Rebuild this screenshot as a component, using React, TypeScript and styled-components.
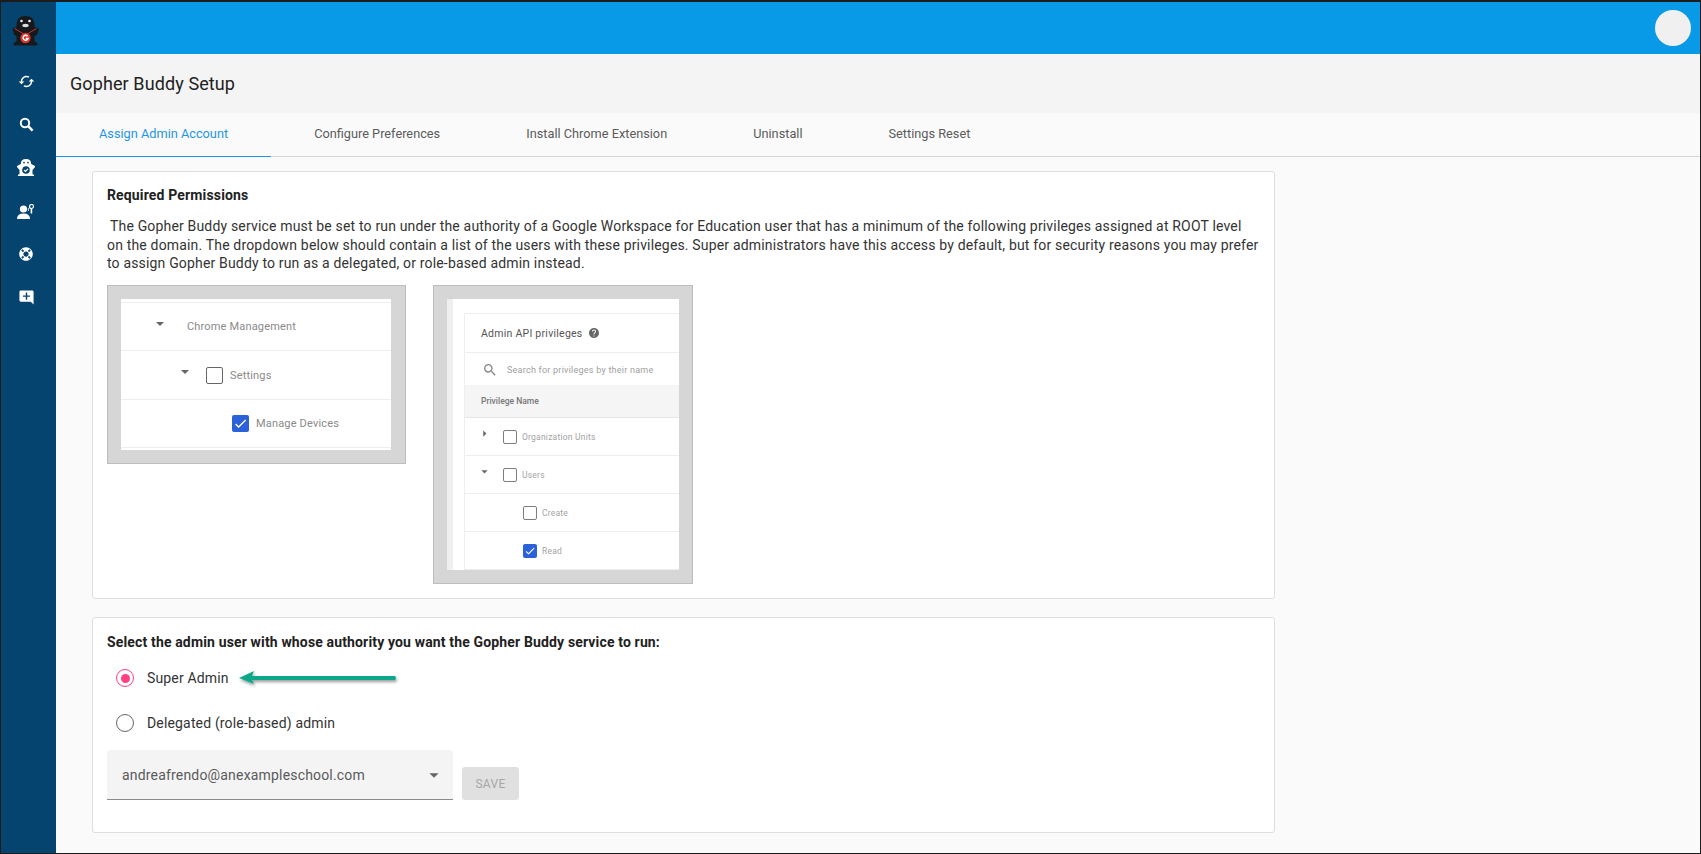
import React from "react";
import styled, { createGlobalStyle } from "styled-components";
import { MdSync, MdSearch, MdAddComment, MdArrowDropDown, MdArrowRight, MdHelp, MdCheck } from "react-icons/md";
import { FaLifeRing } from "react-icons/fa";

const Global = createGlobalStyle`
  html, body { margin: 0; padding: 0; background: #fff; }
  body { font-family: Roboto, "Liberation Sans", sans-serif; color: #212121; }
  * { box-sizing: border-box; }
`;

const Shell = styled.div`
  width: 1701px; height: 854px; display: flex; overflow: hidden;
  border-style: solid; border-color: #1c1c1c; border-width: 2px 1px 1px 1px;
  background: #fafafa;
`;
const Sidebar = styled.nav`
  width: 55px; flex: none; background: #05446f; display: flex; flex-direction: column; align-items: center; padding-right: 5px;
`;
const LogoSlot = styled.div`
  height: 58px; display: flex; align-items: flex-start; justify-content: center; padding-top: 13px;
`;
const NavIcon = styled.div`
  height: 43.2px; width: 100%; display: flex; align-items: center; justify-content: center; color: #fff;
`;
const SyncIcon = styled(MdSync)`
  transform: rotate(90deg);
`;
const Main = styled.div`
  flex: 1; min-width: 0; display: flex; flex-direction: column;
`;
const TopBar = styled.header`
  height: 52px; flex: none; background: #089ae6; display: flex; align-items: center; justify-content: flex-end; padding-right: 9px;
`;
const Avatar = styled.div`
  width: 36px; height: 36px; border-radius: 50%; background: #f0f0f0;
`;
const TitleBand = styled.div`
  height: 59px; flex: none; background: #f4f4f4; display: flex; align-items: center; padding-left: 14px;
`;
const Title = styled.h1`
  margin: 0; font-size: 18px; font-weight: 400; color: #212121; letter-spacing: 0.1px;
`;
const Tabs = styled.div`
  height: 44px; flex: none; display: flex; border-bottom: 1px solid #d4d4d4; background: #fafafa;
`;
const Tab = styled.div<{ $active?: boolean }>`
  padding: 0 43px 2px; display: flex; align-items: center; height: 44px; font-size: 12.75px;
  color: ${(p) => (p.$active ? "#1e96e4" : "#5b5b5b")};
  border-bottom: 1px solid ${(p) => (p.$active ? "#1e96e4" : "transparent")};
  font-weight: 400;
`;
const Content = styled.div`
  padding: 14px 0 0 36px; display: flex; flex-direction: column; gap: 18px;
`;
const Card = styled.section<{ $h: number; $pt: number }>`
  width: 1183px; height: ${(p) => p.$h}px; background: #fff; border: 1px solid #dedede; border-radius: 3px; padding: ${(p) => p.$pt}px 13px 0 14px;
`;
const CardTitle = styled.h2`
  margin: 0; font-size: 14px; line-height: 19px; font-weight: 700; color: #212121; letter-spacing: 0.15px;
`;
const Para = styled.p`
  margin: 12px 0 0 0; font-size: 14px; line-height: 18.7px; color: #333; letter-spacing: 0.17px; text-indent: 3px;
`;
const Shots = styled.div`
  display: flex; gap: 27px; margin-top: 12px; align-items: flex-start;
`;
const Frame = styled.div<{ $w: number; $h: number; $pr: number }>`
  width: ${(p) => p.$w}px; height: ${(p) => p.$h}px; background: #d6d6d6; border: 1px solid #bdbdbd; padding: 13px ${(p) => p.$pr}px 13px 13px; flex: none;
`;
const Shot = styled.div`
  width: 100%; height: 100%; background: #fff; overflow: hidden; font-family: Roboto, sans-serif; color: #8a8a8a;
`;
const ChromeShot = styled(Shot)`
  padding-top: 3px;
`;
const ChromeRow = styled.div<{ $pl: number; $first?: boolean }>`
  height: ${(p) => (p.$first ? 49.3 : 48.3)}px; border-bottom: 1px solid #eeeeee; border-top: ${(p) => (p.$first ? "1px solid #eeeeee" : "none")}; display: flex; align-items: center; padding-left: ${(p) => p.$pl}px; font-size: 11px; letter-spacing: 0.17px;
`;
const RowLabel = styled.span<{ $ml: number }>`
  margin-left: ${(p) => p.$ml}px;
`;
const Caret = styled.span<{ $mr: number }>`
  display: inline-block; width: 0; height: 0; border-left: 4px solid transparent; border-right: 4px solid transparent; border-top: 4px solid #666;
  margin-right: ${(p) => p.$mr}px; position: relative; top: -3px; flex: none;
`;
const Check = styled.span<{ $size: number; $on?: boolean; $light?: boolean }>`
  width: ${(p) => p.$size}px; height: ${(p) => p.$size}px; flex: none; border-radius: 2px; display: inline-flex; align-items: center; justify-content: center;
  border: ${(p) => (p.$on ? "none" : `1.5px solid ${p.$light ? "#7e7e7e" : "#666"}`)}; background: ${(p) => (p.$on ? "#2b62d9" : "#fff")}; color: #fff;
`;
const ApiShot = styled(Shot)`
  display: flex; padding-left: 6px; background: #efefef;
`;
const ApiBody = styled.div`
  flex: 1; background: #fff; padding: 14px 0 0 11px;
`;
const ApiPanel = styled.div`
  border-left: 1px solid #eee; border-top: 1px solid #eee;
`;
const ApiHead = styled.div`
  height: 39px; border-bottom: 1px solid #eee; display: flex; align-items: center; padding-left: 16px; gap: 5px; font-size: 10.5px; color: #555; letter-spacing: 0.25px;
`;
const ApiSearch = styled.div`
  height: 32px; display: flex; align-items: center; padding: 1px 0 0 17px; gap: 9px; font-size: 9px; color: #a0a0a0; letter-spacing: 0.24px;
`;
const ApiColumn = styled.div`
  height: 33px; background: #f5f5f5; border-bottom: 1px solid #e6e6e6; display: flex; align-items: center; padding-left: 16px; font-size: 8.5px; font-weight: 500; color: #777;
`;
const ApiRow = styled.div<{ $pl: number }>`
  height: 38px; border-bottom: 1px solid #eee; display: flex; align-items: center; padding-left: ${(p) => p.$pl}px; font-size: 8.5px; color: #a3a3a3; letter-spacing: 0.22px; gap: 5px;
`;
const ApiCaretSlot = styled.span`
  width: 18px; display: inline-flex; color: #666; margin-right: -1px; position: relative; top: -3px; left: -4px;
`;
const RadioRow = styled.label<{ $mt: number }>`
  display: flex; align-items: center; height: 20px; margin-top: ${(p) => p.$mt}px; padding-left: 9px; font-size: 14px; letter-spacing: 0.16px; color: #333;
`;
const Radio = styled.span<{ $on?: boolean }>`
  width: 18px; height: 18px; border-radius: 50%; flex: none; margin-right: 13px; display: flex; align-items: center; justify-content: center;
  border: 1.5px solid ${(p) => (p.$on ? "#ff4081" : "#666")};
  &::after { content: ""; width: 9px; height: 9px; border-radius: 50%; background: ${(p) => (p.$on ? "#ff4081" : "transparent")}; }
`;
const Arrow = styled.svg`
  margin-left: 10px; overflow: visible; flex: none;
`;
const SelectRow = styled.div`
  display: flex; align-items: flex-end; margin-top: 17px; gap: 9px;
`;
const Select = styled.div`
  width: 346px; height: 50px; background: #f4f4f4; border-bottom: 1px solid #8a8a8a; border-radius: 3px 3px 0 0; display: flex; align-items: center; justify-content: space-between;
  padding: 0 8px 0 15px; font-size: 14px; letter-spacing: 0.18px; color: #5a5a5a;
`;
const SaveButton = styled.button`
  width: 57px; height: 33px; border: none; border-radius: 3px; background: #e0e0e0; color: #a6a6a6; font: 400 12px Roboto, sans-serif; letter-spacing: 0.3px; padding: 0;
`;

const Logo = () => (
  <svg width="28" height="31" viewBox="0 0 28 31">
    <path d="M4.5 10 Q4.5 1 13.5 1 Q22.5 1 22.5 10 L22.5 12 L27 13.5 L25 20 L22.5 21 L22.5 26 L25.5 28.5 Q26 30.5 24 30.5 L3 30.5 Q1 30.5 1.5 28.5 L4.5 26 L4.5 21 L2 20 L0.5 13.5 L4.5 12 Z" fill="#17181c" />
    <circle cx="9.5" cy="6" r="1.3" fill="#eee" />
    <circle cx="17.5" cy="6" r="1.3" fill="#eee" />
    <ellipse cx="13.5" cy="10.5" rx="3.2" ry="1.7" fill="#ddd" />
    <path d="M2.5 13.5 L13.5 20 L24.5 13.5" stroke="#c0392b" strokeWidth="1" fill="none" />
    <circle cx="13.5" cy="23" r="5.2" fill="#d8362a" />
    <path d="M15.6 21.2 A2.5 2.5 0 1 0 16 23.6 L13.8 23.6" stroke="#fff" strokeWidth="1.5" fill="none" />
  </svg>
);
const BoldSearchIcon = () => (
  <svg width="15" height="15" viewBox="0 0 15 15" fill="none" stroke="#fff">
    <circle cx="6" cy="6" r="4.2" strokeWidth="2" />
    <path d="M9.2 9.2 L13.6 13.6" strokeWidth="2.4" />
  </svg>
);
const GopherCheck = () => (
  <svg width="18" height="17" viewBox="0 0 18 17" fill="#fff">
    <path d="M3.8 5 Q3.8 0 9 0 Q14.2 0 14.2 5 L18 7 L18 8 L15.5 11 L15.5 15.5 L17 15.5 L17 17 L1 17 L1 15.5 L2.5 15.5 L2.5 11 L0 8 L0 7 Z" />
    <circle cx="9" cy="11" r="3.8" fill="#05446f" />
    <path d="M7.1 11 L8.5 12.4 L11 9.8" stroke="#fff" strokeWidth="1.1" fill="none" />
    <circle cx="7" cy="3.6" r=".9" fill="#05446f" />
    <circle cx="11" cy="3.6" r=".9" fill="#05446f" />
  </svg>
);
const PersonKey = () => (
  <svg width="18" height="15" viewBox="0 0 18 15" fill="#fff">
    <circle cx="6.5" cy="5" r="3.6" />
    <path d="M0 15 Q0 9.5 6.5 9.5 Q13 9.5 13 15Z" />
    <circle cx="14.5" cy="2.5" r="2" fill="none" stroke="#fff" strokeWidth="1.2" />
    <rect x="13.6" y="4.5" width="1.6" height="5" />
    <rect x="10.8" y="4" width="1.2" height="3" opacity=".7" />
  </svg>
);

export default function App() {
  return (
    <>
      <Global />
      <Shell>
        <Sidebar>
          <LogoSlot><Logo /></LogoSlot>
          <NavIcon><SyncIcon size={17} /></NavIcon>
          <NavIcon><BoldSearchIcon /></NavIcon>
          <NavIcon><GopherCheck /></NavIcon>
          <NavIcon><PersonKey /></NavIcon>
          <NavIcon><FaLifeRing size={14} /></NavIcon>
          <NavIcon><MdAddComment size={17} /></NavIcon>
        </Sidebar>
        <Main>
          <TopBar><Avatar /></TopBar>
          <TitleBand><Title>Gopher Buddy Setup</Title></TitleBand>
          <Tabs>
            <Tab $active>Assign Admin Account</Tab>
            <Tab>Configure Preferences</Tab>
            <Tab>Install Chrome Extension</Tab>
            <Tab>Uninstall</Tab>
            <Tab>Settings Reset</Tab>
          </Tabs>
          <Content>
            <Card $h={428} $pt={14}>
              <CardTitle>Required Permissions</CardTitle>
              <Para>{"The Gopher Buddy service must be set to run under the authority of a Google Workspace for Education user that has a minimum of the following privileges assigned at ROOT level on the domain. The dropdown below should contain a list of the users with these privileges. Super administrators have this access by default, but for security reasons you may prefer to assign Gopher Buddy to run as a delegated, or role-based admin instead."}</Para>
              <Shots>
                <Frame $w={299} $h={179} $pr={14}>
                  <ChromeShot>
                    <ChromeRow $pl={35} $first><Caret $mr={23}/>Chrome Management</ChromeRow>
                    <ChromeRow $pl={60}><Caret $mr={17}/><Check $size={17} /><RowLabel $ml={7}>Settings</RowLabel></ChromeRow>
                    <ChromeRow $pl={111}><Check $size={17} $on><MdCheck size={15} /></Check><RowLabel $ml={7}>Manage Devices</RowLabel></ChromeRow>
                  </ChromeShot>
                </Frame>
                <Frame $w={260} $h={299} $pr={13}>
                  <ApiShot>
                    <ApiBody>
                      <ApiPanel>
                        <ApiHead>Admin API privileges <MdHelp size={12} color="#666" /></ApiHead>
                        <ApiSearch><MdSearch size={16} color="#888" />Search for privileges by their name</ApiSearch>
                        <ApiColumn>Privilege Name</ApiColumn>
                        <ApiRow $pl={16}><ApiCaretSlot><MdArrowRight size={15} /></ApiCaretSlot><Check $size={14} $light />Organization Units</ApiRow>
                        <ApiRow $pl={16}><ApiCaretSlot><MdArrowDropDown size={15} /></ApiCaretSlot><Check $size={14} $light />Users</ApiRow>
                        <ApiRow $pl={58}><Check $size={14} $light />Create</ApiRow>
                        <ApiRow $pl={58}><Check $size={14} $on><MdCheck size={12} /></Check>Read</ApiRow>
                      </ApiPanel>
                    </ApiBody>
                  </ApiShot>
                </Frame>
              </Shots>
            </Card>
            <Card $h={216} $pt={15}>
              <CardTitle>Select the admin user with whose authority you want the Gopher Buddy service to run:</CardTitle>
              <RadioRow $mt={16}>
                <Radio $on />Super Admin
                <Arrow width="158" height="14" viewBox="0 0 158 14">
                  <defs>
                    <filter id="arrowShadow" x="-5%" y="-60%" width="110%" height="260%">
                      <feDropShadow dx="1" dy="2" stdDeviation="1.5" floodColor="#000" floodOpacity="0.4" />
                    </filter>
                  </defs>
                  <path d="M0 7 L15 0 L13 5 L156 5 Q158 7 156 9 L13 9 L15 13 Z" fill="#10a88a" filter="url(#arrowShadow)" />
                </Arrow>
              </RadioRow>
              <RadioRow $mt={25}><Radio />Delegated (role-based) admin</RadioRow>
              <SelectRow>
                <Select>andreafrendo@anexampleschool.com<MdArrowDropDown size={22} color="#666" /></Select>
                <SaveButton>SAVE</SaveButton>
              </SelectRow>
            </Card>
          </Content>
        </Main>
      </Shell>
    </>
  );
}
